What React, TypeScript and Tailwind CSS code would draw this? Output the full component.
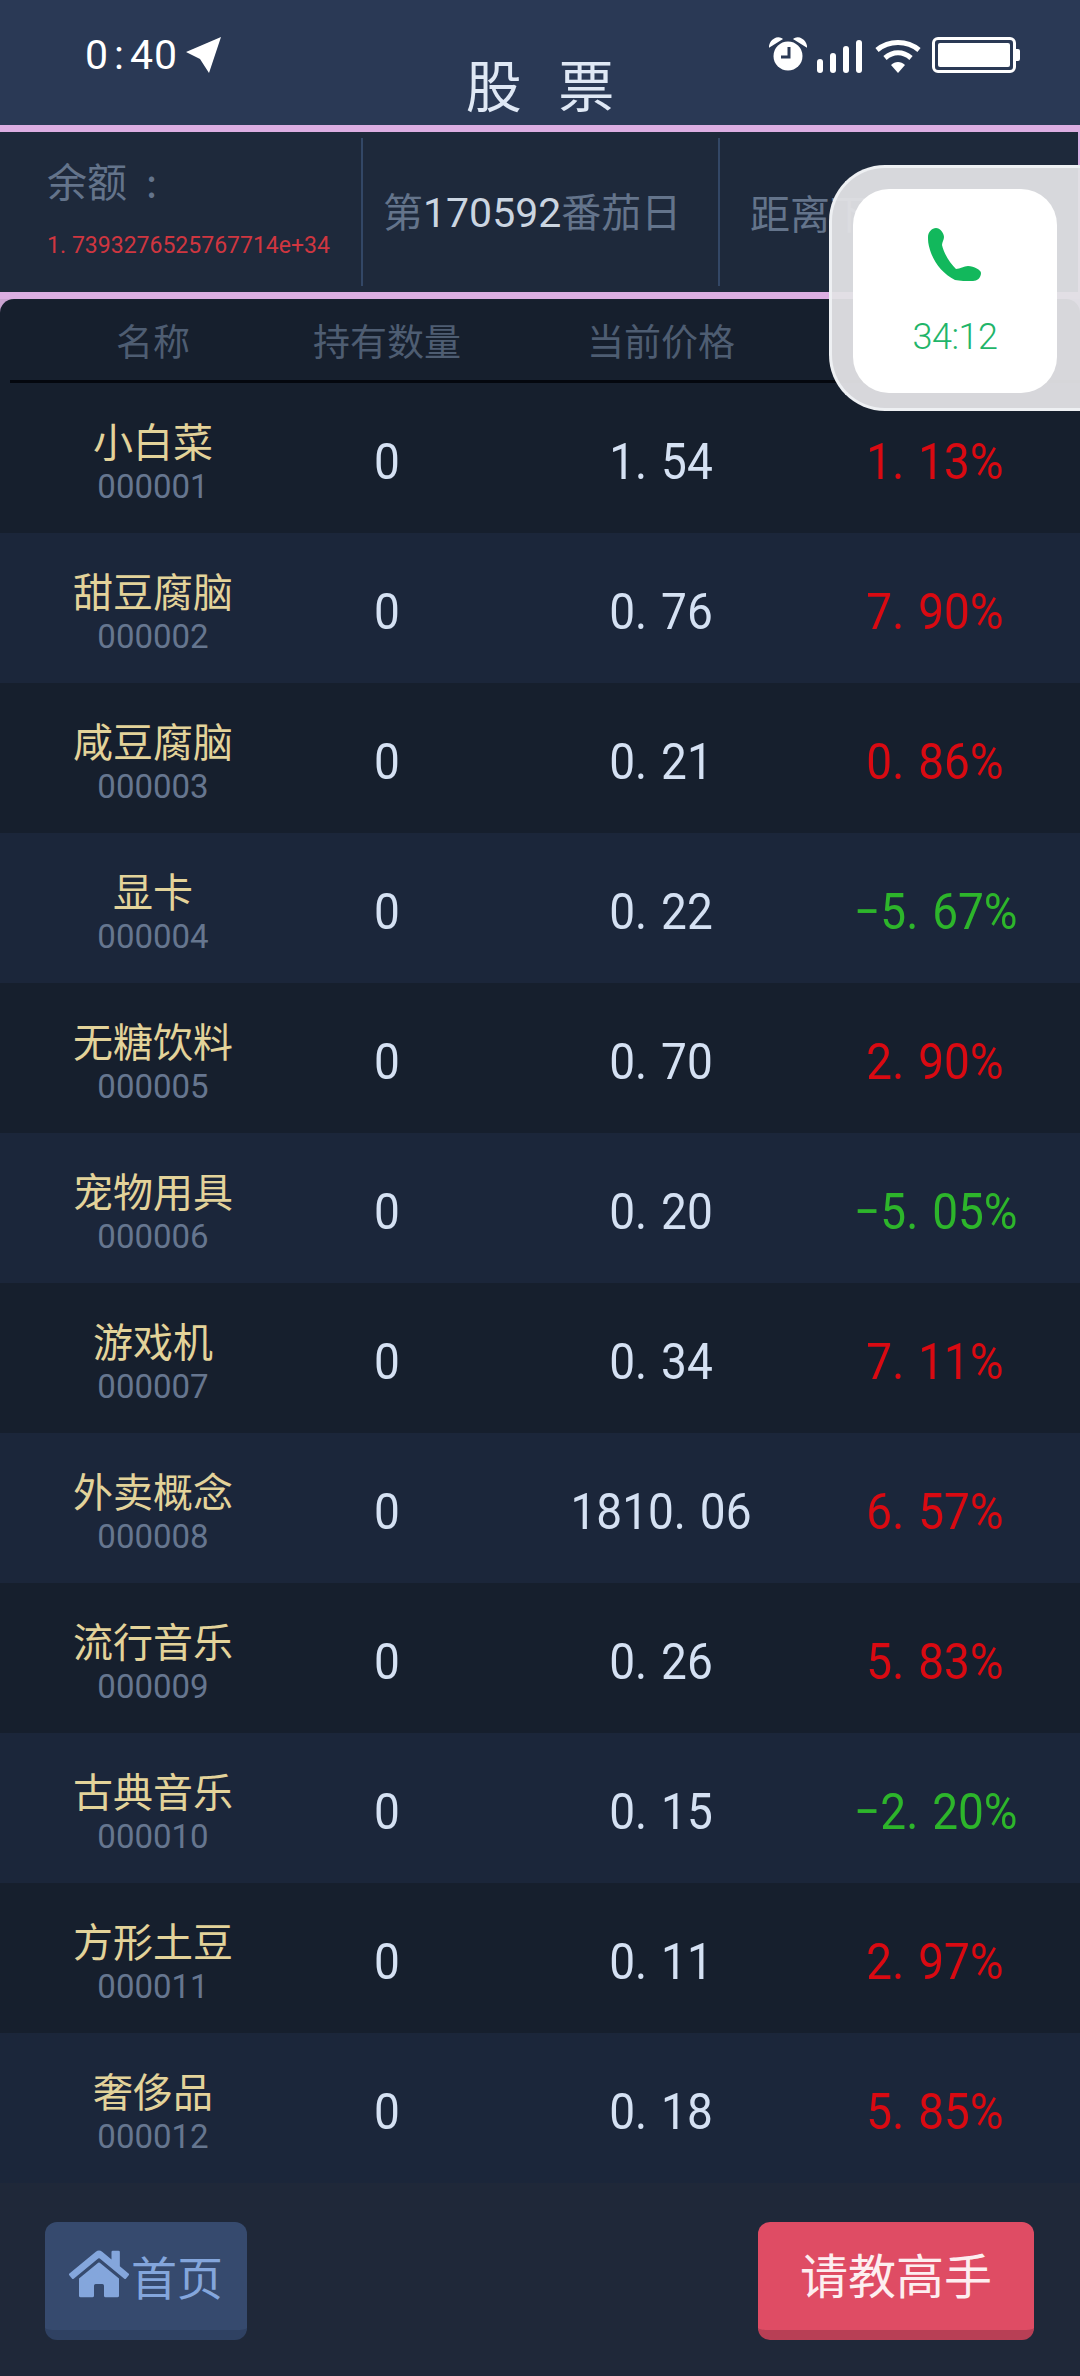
import { FaHome } from "react-icons/fa";

const FONT = "font-['Roboto','Noto_Sans_CJK_SC',sans-serif]";
const CJK = "font-['Noto_Sans_CJK_SC','Noto_Sans',sans-serif]";
const COLS = "grid grid-cols-[306px_162px_386px_162px]";
const NUMBER = "text-center text-[46px] leading-none pt-[6px] scale-y-[1.1]";

const STOCKS = [
  { name: "小白菜", code: "000001", price: "1.54", change: "1.13%" },
  { name: "甜豆腐脑", code: "000002", price: "0.76", change: "7.90%" },
  { name: "咸豆腐脑", code: "000003", price: "0.21", change: "0.86%" },
  { name: "显卡", code: "000004", price: "0.22", change: "−5.67%" },
  { name: "无糖饮料", code: "000005", price: "0.70", change: "2.90%" },
  { name: "宠物用具", code: "000006", price: "0.20", change: "−5.05%" },
  { name: "游戏机", code: "000007", price: "0.34", change: "7.11%" },
  { name: "外卖概念", code: "000008", price: "1810.06", change: "6.57%" },
  { name: "流行音乐", code: "000009", price: "0.26", change: "5.83%" },
  { name: "古典音乐", code: "000010", price: "0.15", change: "−2.20%" },
  { name: "方形土豆", code: "000011", price: "0.11", change: "2.97%" },
  { name: "奢侈品", code: "000012", price: "0.18", change: "5.85%" },
];

// the phone font draws the dot as wide as a digit
function Num({ value, dot = "w-[26px]" }: { value: string; dot?: string }) {
  const [a, b] = value.split(".");
  return (
    <span className="inline-flex items-baseline">
      {a}
      <span className={`inline-block text-left ${dot}`}>.</span>
      {b}
    </span>
  );
}

function StatusBar() {
  return (
    <div className="absolute inset-x-0 top-[37px] flex items-start justify-between pl-[85px] pr-[60px]">
      <div className="flex items-start">
        <span className={`${FONT} text-[41px] leading-[36px] text-white tracking-[1px]`}>
          0<span className="mx-[5px]">:</span>40
        </span>
        <svg width="36" height="37" viewBox="0 0 36 37" className="ml-[8px]">
          <path d="M35 0 0 15 14 22 23 36Z" fill="#fff" />
        </svg>
      </div>
      <div className="flex items-start">
        <svg width="38" height="34" viewBox="0 0 38 34">
          <circle cx="19" cy="19" r="14.5" fill="#fff" />
          <path d="M1 9C2 3 8 0 12 2ZM37 9C36 3 30 0 26 2Z" fill="#fff" stroke="#fff" strokeWidth="2" />
          <path d="M20 10V20H12" fill="none" stroke="#2a3955" strokeWidth="3" />
        </svg>
        <svg width="46" height="34" viewBox="0 0 46 34" className="ml-[10px] mt-[2px]">
          <rect x="0" y="20" width="6" height="14" rx="3" fill="#fff" />
          <rect x="13" y="14" width="6" height="20" rx="3" fill="#fff" />
          <rect x="26" y="7" width="6" height="27" rx="3" fill="#fff" />
          <rect x="39" y="1" width="6" height="33" rx="3" fill="#fff" />
        </svg>
        <svg width="48" height="34" viewBox="0 0 48 34" className="ml-[11px] mt-[2px]">
          <path d="M3 11C15 1 33 1 45 11" fill="none" stroke="#fff" strokeWidth="5" />
          <path d="M11 19C19 12 29 12 37 19" fill="none" stroke="#fff" strokeWidth="5" />
          <path d="M17 26C21 22 27 22 31 26L24 34Z" fill="#fff" />
        </svg>
        <div className="ml-[10px] flex items-center">
          <div className="h-[36px] w-[84px] rounded-[6px] border-[3px] border-white p-[3px]">
            <div className="h-full w-full rounded-[2px] bg-white" />
          </div>
          <div className="h-[12px] w-[4px] rounded-r-[2px] bg-white" />
        </div>
      </div>
    </div>
  );
}

function InfoBar() {
  return (
    <div className="flex h-[174px] border-y-[7px] border-r-2 border-[#dcaee2] bg-[#1e293b]">
      <div className="flex w-[361px] flex-col pl-[47px] pt-[19px]">
        <div className={`${CJK} text-[40px] leading-[58px] text-[#64748b]`}>
          余额<span className="ml-[19px]">:</span>
        </div>
        <div className={`${FONT} mt-[22px] text-[23px] leading-[30px] text-[#cf3640]`}>
          <Num value="1.7393276525767714e+34" dot="w-[12px]" />
        </div>
      </div>
      <div className="my-[6px] w-[2px] bg-[#334766]" />
      <div className="flex w-[355px] items-center pl-[20px]">
        <p className={`${CJK} text-[40px] text-[#64748b]`}>
          第<span className={`${FONT} text-[41px] text-[#cbd5e1]`}>170592</span>番茄日
        </p>
      </div>
      <div className="my-[6px] w-[2px] bg-[#334766]" />
      <div className={`${CJK} flex flex-1 items-center overflow-hidden whitespace-nowrap pl-[30px] text-[40px] text-[#64748b]`}>
        距离下一天
      </div>
    </div>
  );
}

function StockRow({ stock, even }: { stock: (typeof STOCKS)[number]; even: boolean }) {
  const down = stock.change.startsWith("−");
  return (
    <div className={`${COLS} h-[150px] items-center ${even ? "bg-[#1b263a]" : "bg-[#161f2d]"}`}>
      <div className="flex translate-y-[2px] flex-col items-center">
        <div className={`${CJK} text-[40px] leading-[53px] text-[#e3d39a]`}>{stock.name}</div>
        <div className={`${FONT} text-[33px] leading-[40px] text-[#66768f]`}>{stock.code}</div>
      </div>
      <div className={`${FONT} ${NUMBER} text-[#d5e1f3]`}>0</div>
      <div className={`${FONT} ${NUMBER} text-[#d5e1f3]`}>
        <Num value={stock.price} />
      </div>
      <div className={`${FONT} ${NUMBER} ${down ? "text-[#2db52b]" : "text-[#d90a12]"}`}>
        <Num value={stock.change} />
      </div>
    </div>
  );
}

function CallBubble() {
  return (
    <div className="absolute right-0 top-[165px] h-[246px] w-[251px] rounded-l-[56px] border-y-[3px] border-l-[3px] border-[#eef0f3] bg-[#e1e2e5]/95 pl-[21px] pt-[21px]">
      <div className="flex h-[204px] w-[204px] flex-col items-center rounded-[36px] bg-white pt-[39px]">
        <svg width="54" height="53" viewBox="0 0 54 53">
          <path
            d="M8 0C12 0 16 5 16 9C16 12 14 14 14 17C16 26 22 35 28 41C32 41 36 38 40 38C46 38 53 42 53 45C53 50 49 53 45 53C38 53 32 53 27 52C15 46 6 35 2 22C0 16 0 12 0 9C0 4 4 0 8 0Z"
            fill="#12b85c"
          />
        </svg>
        <div className={`${FONT} mt-[38px] text-[36px] font-light leading-[36px] tracking-[-0.5px] text-[#1fb56a]`}>
          34:12
        </div>
      </div>
    </div>
  );
}

export default function App() {
  return (
    <div className="relative flex h-[2376px] w-[1080px] flex-col overflow-hidden bg-[#1f2839]">
      <header className="relative flex h-[125px] shrink-0 items-end justify-center bg-[#2a3955] pb-[6px] pl-[12px]">
        <StatusBar />
        <h1 className={`${CJK} text-[56px] leading-[72px] tracking-[12px] text-[#dfe8f5]`}>股 票</h1>
      </header>
      <InfoBar />
      <main className="bg-[#c9a3d0]">
        <div className={`${COLS} h-[81px] items-center rounded-t-[14px] bg-[#161f2d] pt-[2px] text-center ${CJK} text-[37px] text-[#4e5d72]`}>
          <div>名称</div>
          <div>持有数量</div>
          <div>当前价格</div>
          <div>涨跌幅</div>
        </div>
        <div className="bg-[#161f2d] pl-[10px]">
          <div className="h-[3px] bg-[#04070e]" />
        </div>
        {STOCKS.map((s, i) => (
          <StockRow key={s.code} stock={s} even={i % 2 === 1} />
        ))}
      </main>
      <footer className="flex flex-1 items-start justify-between pl-[45px] pr-[46px] pt-[39px]">
        <button className="flex h-[118px] w-[202px] items-center justify-center rounded-[12px] border-b-[10px] border-[#2f4162] bg-[#364a6e] pb-[3px] text-[#84a6dc]">
          <FaHome className="-translate-y-[1px] text-[60px]" />
          <span className={`${CJK} ml-[2px] text-[46px] leading-none`}>首页</span>
        </button>
        <button className={`${CJK} h-[118px] w-[276px] rounded-[12px] border-b-[10px] border-[#b83f55] bg-[#df4c64] pb-[6px] text-[48px] text-[#fdeef0]`}>
          请教高手
        </button>
      </footer>
      <CallBubble />
    </div>
  );
}
